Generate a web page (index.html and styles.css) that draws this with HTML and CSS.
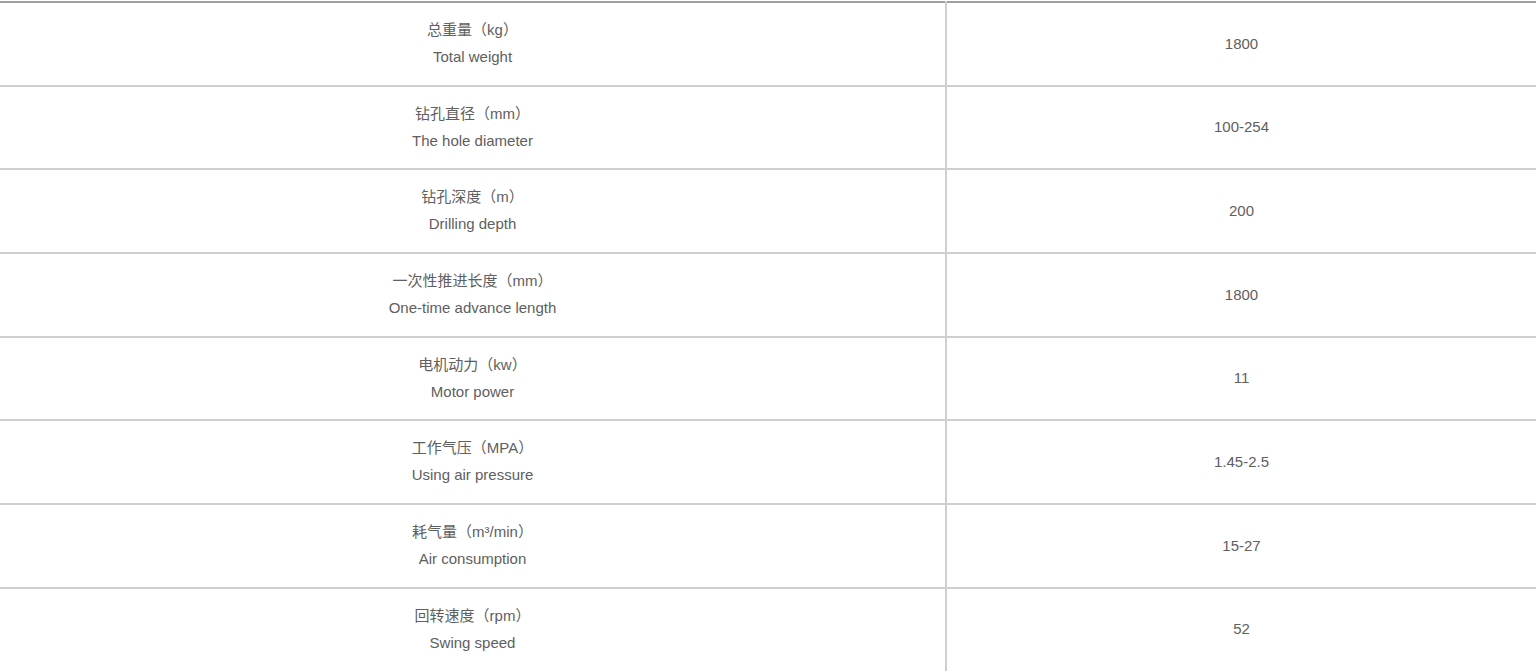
FILE: index.html
```html
<!DOCTYPE html>
<html lang="zh">
<head>
<meta charset="utf-8">
<title>参数</title>
<link rel="stylesheet" href="styles.css">
</head>
<body>
<table class="spec">
  <colgroup><col class="c-name"><col class="c-val"></colgroup>
  <tbody>
    <tr><td>总重量（kg）<br>Total weight</td><td>1800</td></tr>
    <tr><td>钻孔直径（mm）<br>The hole diameter</td><td>100-254</td></tr>
    <tr><td>钻孔深度（m）<br>Drilling depth</td><td>200</td></tr>
    <tr><td>一次性推进长度（mm）<br>One-time advance length</td><td>1800</td></tr>
    <tr><td>电机动力（kw）<br>Motor power</td><td>11</td></tr>
    <tr><td>工作气压（MPA）<br>Using air pressure</td><td>1.45-2.5</td></tr>
    <tr><td>耗气量（m³/min）<br>Air consumption</td><td>15-27</td></tr>
    <tr><td>回转速度（rpm）<br>Swing speed</td><td>52</td></tr>
  </tbody>
</table>
</body>
</html>
```
FILE: styles.css
```css
html, body {
  margin: 0;
  padding: 0;
  background: #fff;
}
body {
  padding-top: 1px;
}
.spec {
  width: 1536px;
  border-collapse: collapse;
  table-layout: fixed;
  font-family: "Liberation Sans", Arial, "Noto Sans CJK SC", sans-serif;
  font-size: 15px;
  line-height: 27px;
  color: #606060;
  border-top: 2px solid #a0a0a0;
}
.c-name { width: 946px; }
.c-val { width: 590px; }
.spec td {
  text-align: center;
  vertical-align: middle;
  padding: 13px 8px 14.7px;
  border-top: 2px solid #cfcfcf;
  border-bottom: 2px solid #cfcfcf;
}
.spec tr:first-child td {
  border-top: 2px solid #a0a0a0;
}
.spec td:first-child {
  border-right: 2px solid #cfcfcf;
}
```
